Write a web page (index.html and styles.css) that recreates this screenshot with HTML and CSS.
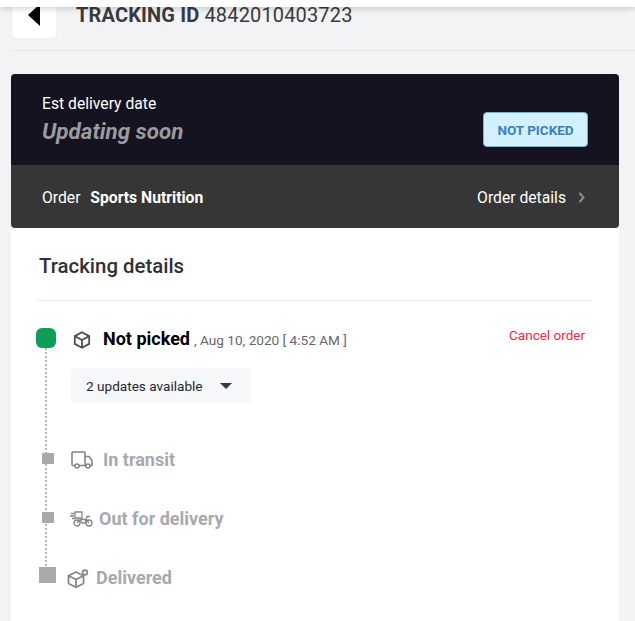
FILE: index.html
```html
<!DOCTYPE html>
<html lang="en">
<head>
<meta charset="utf-8">
<title>Tracking details</title>
<link rel="stylesheet" href="styles.css">
</head>
<body>
<div class="topbar"></div>
<header class="header">
  <button class="back" aria-label="Back"><svg width="14" height="22" viewBox="0 0 14 22"><path d="M13 0v22L1 11z" fill="#000"/></svg></button>
  <h1 class="track"><b>TRACKING ID</b> 4842010403723</h1>
</header>
<section class="summary">
  <div class="sum-top">
    <div>
      <div class="est">Est delivery date</div>
      <div class="soon">Updating soon</div>
    </div>
    <span class="badge">NOT PICKED</span>
  </div>
  <div class="sum-bottom">
    <div class="order">Order <b>Sports Nutrition</b></div>
    <div class="details">Order details
      <svg width="7" height="11" viewBox="0 0 7 11"><path d="M1.5 1l4 4.500-4 4.500" fill="none" stroke="#8f8f8f" stroke-width="2"/></svg>
    </div>
  </div>
</section>
<main class="card">
  <h2 class="card-title">Tracking details</h2>
  <div class="timeline">
    <div class="row row-now">
      <span class="mark mark-now"></span>
      <svg class="ic ic-box" width="18" height="18" viewBox="0 0 18 18" fill="none" stroke="#4d4d4d" stroke-width="1.8" stroke-linejoin="round"><path d="M9 1.200l7.200 3.900v7.800L9 16.800l-7.200-3.900V5.100z"/><path d="M1.800 5.100L9 9l7.200-3.900M9 9v7.800"/></svg>
      <span class="now-label">Not picked</span>
      <span class="now-date">, Aug 10, 2020 [ 4:52 AM ]</span>
      <a class="cancel">Cancel order</a>
    </div>
    <button class="updates">2 updates available <svg width="12" height="6" viewBox="0 0 12 6"><path d="M0 0h12L6 6z" fill="#333a40"/></svg></button>
    <div class="row row-transit">
      <span class="mark mark-small"></span>
      <svg class="ic ic-truck" width="22" height="18" viewBox="0 0 22 18" fill="none" stroke="#858585" stroke-width="1.6" stroke-linejoin="round"><path d="M4 14.500H2a1 1 0 0 1-1-1V2a1 1 0 0 1 1-1h11a1 1 0 0 1 1 1v12.500H8"/><path d="M14 5.500h4l3 4v5h-2M14 14.500h1"/><circle cx="6" cy="15" r="2"/><circle cx="17" cy="15" r="2"/></svg>
      <span class="label">In transit</span>
    </div>
    <div class="row row-out">
      <span class="mark mark-small"></span>
      <svg class="ic ic-bike" width="23" height="16" viewBox="0 0 23 16" fill="none" stroke="#858585" stroke-width="1.3"><path d="M5 1h7v6H5zM1 2.500h3M0 5h4M2 7.500h3"/><circle cx="7" cy="12" r="3"/><circle cx="19" cy="12" r="3"/><path d="M7 12l3-3.500h6l3 3.500M10 8.500l2 3.500h3l2-6.500h3"/></svg>
      <span class="label">Out for delivery</span>
    </div>
    <div class="row row-done">
      <span class="mark mark-big"></span>
      <svg class="ic ic-open" width="22" height="19" viewBox="0 0 22 19" fill="none" stroke="#858585" stroke-width="1.8" stroke-linejoin="round"><path d="M9 3l7.500 3.800v7.700L9 18.200l-7.500-3.700V6.800z"/><path d="M1.500 6.800L9 10.500l7.500-3.700M9 10.500v7.700"/><circle cx="18" cy="3.500" r="2.400" stroke-width="1.600"/></svg>
      <span class="label">Delivered</span>
    </div>
  </div>
</main>
</body>
</html>
```
FILE: styles.css
```css
* { box-sizing: border-box; }
html, body { margin: 0; height: 621px; overflow: hidden; }
body { background: #f1f3f5; font-family: Roboto, "Liberation Sans", sans-serif; color: #2f2f33; }

.topbar { height: 7px; background: #fff; box-shadow: 0 1px 6px rgba(0,0,0,.22); position: relative; z-index: 2; }

.header { height: 44px; margin-left: 11px; border-bottom: 1px solid #e6e8ea; display: flex; align-items: flex-start; }
.back { width: 44px; height: 31px; margin-left: 1px; padding: 0 0 15px 0; border: 0; border-radius: 0 0 3px 3px; background: #fff; box-shadow: 0 0 1px rgba(0,0,0,.15); display: flex; align-items: center; justify-content: center; }
.track { margin: -2px 0 0 20px; font-size: 20px; line-height: 21px; font-weight: 400; color: #3a3a40; letter-spacing: .15px; }
.track b { font-weight: 700; }

.summary { margin: 23px 16px 0 11px; border-radius: 4px; overflow: hidden; color: #fff; }
.sum-top { height: 91px; background: #14131f; padding: 20px 31px 0; display: flex; justify-content: space-between; }
.est { font-size: 15.700px; line-height: 20px; }
.soon { font-size: 22.400px; line-height: 30px; font-style: italic; font-weight: 700; color: #9a9aa0; margin-top: 2px; }
.badge { margin-top: 18px; height: 35px; width: 105px; display: flex; align-items: center; justify-content: center; background: #d3f0fd; border: 1px solid #6db7e6; border-radius: 4px; color: #3b7fc0; font-size: 13.500px; font-weight: 700; }
.sum-bottom { height: 63px; background: #363636; padding: 2px 34px 0 31px; display: flex; justify-content: space-between; align-items: center; font-size: 15.700px; }
.order b { margin-left: 6px; font-weight: 700; }
.details { display: flex; align-items: center; gap: 12px; }

.card { margin: 0 16px 0 11px; height: 393px; background: #fff; padding: 0 27px; border-radius: 4px 4px 0 0; }
.card-title { margin: 0; height: 73px; padding: 26px 0 0 1px; border-bottom: 1px solid #e9ebed; font-size: 20.400px; line-height: 25px; font-weight: 500; color: #303036; }

.timeline { position: relative; margin: 27px 0 0 -2px; }
.timeline::before { content: ""; position: absolute; left: 9px; top: 20px; height: 222px; border-left: 2px dotted #b4b4b4; }

.row { display: flex; align-items: center; position: relative; }
.mark { flex: none; display: block; background: #a9a9ad; }
.mark-now { width: 20px; height: 20px; border-radius: 6px; background: #0f9d58; }
.mark-small { width: 12px; height: 11px; margin: -3px 2px 0 6px; }
.mark-big { width: 17px; height: 16px; margin: -6px 0 0 3px; }

.row-now { height: 20px; }
.ic-box { margin-left: 17px; margin-top: 3px; }
.now-label { margin-left: 12px; font-size: 18px; font-weight: 700; color: #000; }
.now-date { margin-left: 4px; margin-top: 3px; font-size: 13.600px; font-weight: 400; color: #66666c; }
.cancel { margin-left: auto; margin-right: 7px; margin-top: -6px; font-size: 13.500px; font-weight: 400; color: #f5283f; }

.updates { display: flex; align-items: center; gap: 17px; margin: 20px 0 0 35px; width: 180px; height: 35px; padding: 0 0 0 15px; border: 0; border-radius: 4px; background: #f5f7f9; font-family: inherit; font-size: 13.600px; color: #26262c; }

.label { font-size: 18px; font-weight: 700; color: #a8a9ae; margin-top: -2px; }
.row-transit { height: 20px; margin-top: 47px; }
.ic-truck { margin-left: 15px; }
.row-transit .label { margin-left: 10px; }
.row-out { height: 20px; margin-top: 39px; }
.ic-bike { margin-left: 14px; }
.row-out .label { margin-left: 6px; }
.row-done { height: 20px; margin-top: 39px; }
.ic-open { margin-left: 11px; }
.row-done .label { margin-left: 7px; }
```
